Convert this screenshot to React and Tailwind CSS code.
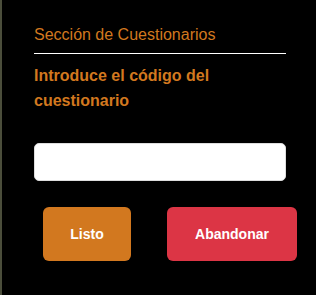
import React from 'react';

const App = () => {
  return (
    <div className="w-[316px] h-[295px] flex bg-black" style={{ fontFamily: '"Liberation Sans", Arial, sans-serif' }}>
      <div className="w-[2px] shrink-0 h-full bg-[#4b4e3b]"></div>
      <div className="flex-1 min-w-0 flex flex-col pl-[32px] pr-[30px] pt-[23px]">
        <div className="border-b border-white pb-[6px]">
          <h2 className="text-[16px] leading-6 text-[#d2781f] font-normal">Sección de Cuestionarios</h2>
        </div>
        <p className="mt-[9px] text-[16px] leading-[25px] font-bold text-[#d2781f]">
          Introduce el código del cuestionario
        </p>
        <input
          type="text"
          className="mt-[30px] h-[38px] w-full min-w-0 bg-white rounded-[5px] border border-[#dddddd] outline-none"
        />
        <div className="mt-[26px] flex pl-[9px] gap-[36px]">
          <button className="w-[88px] shrink-0 h-[54px] rounded-[6px] bg-[#d2781f] text-white text-[14px] font-bold">
            Listo
          </button>
          <button className="w-[130px] shrink-0 h-[54px] rounded-[6px] bg-[#dc3545] text-white text-[14px] font-bold">
            Abandonar
          </button>
        </div>
      </div>
    </div>
  );
};

export default App;
